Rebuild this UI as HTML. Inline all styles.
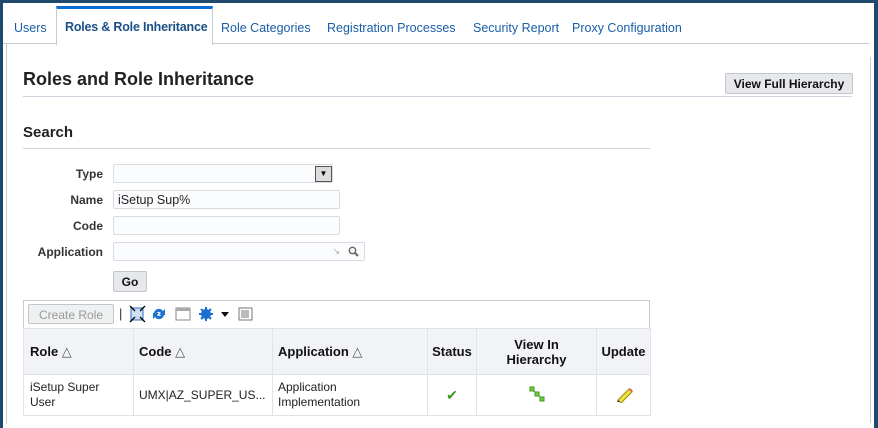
<!DOCTYPE html>
<html><head><style>
*{box-sizing:border-box;margin:0;padding:0}
body{width:878px;height:423px;overflow:hidden;background:#1f4a6e;font-family:"Liberation Sans",Arial,sans-serif;position:relative}
.frame{position:absolute;left:3px;top:3px;width:871px;height:425px;background:#fff}
.tabs{position:absolute;left:3px;top:0;height:44px;width:866px;border-bottom:1px solid #c4ccd8}
.tab{position:absolute;top:21px;font-size:12.5px;color:#1a5ea8;white-space:nowrap}
.active{position:absolute;left:56px;top:6px;width:157px;height:39px;border:1px solid #c4ccd8;border-top:3px solid #0a6ad6;border-bottom:none;background:#fff;font-size:12.5px;font-weight:bold;color:#1b4f86;padding:11px 0 0 8px;white-space:nowrap;letter-spacing:-0.2px}
.box{position:absolute;left:6px;top:44px;width:866px;height:380px;border-left:1px solid #c4ccd8}
h1{position:absolute;left:23px;top:69px;font-size:18px;color:#222}
.rule{position:absolute;height:1px;background:#cfd6e0}
h2{position:absolute;left:23px;top:124px;font-size:15px;color:#222}
.btn{position:absolute;background:#e6e8eb;border:1px solid #c3c7cc;border-radius:2px;font-size:12px;font-weight:bold;color:#111;text-align:center}
.lbl{position:absolute;font-size:12px;font-weight:bold;color:#333;text-align:right;width:80px;left:23px}
.inp{position:absolute;left:113px;height:19px;border:1px solid #d8dce2;background:#fbfcfd;font-size:12.5px;color:#222;padding:2px 4px;border-radius:2px}
table{position:absolute;left:23px;top:328px;border-collapse:collapse;font-size:12px}
td,th{border:1px solid #dfe3e8}
th{background:#f1f3f6;font-size:13px;color:#111;height:46px}
td{height:41px;color:#222}
.tb{position:absolute;left:23px;top:300px;width:627px;height:29px;border:1px solid #c4ccd8;border-bottom:none}
</style></head><body>
<div class="frame"></div>
<div class="tabs"></div>
<div class="tab" style="left:14px">Users</div>
<div class="active">Roles &amp; Role Inheritance</div>
<div class="tab" style="left:221px">Role Categories</div>
<div class="tab" style="left:327px">Registration Processes</div>
<div class="tab" style="left:473px">Security Report</div>
<div class="tab" style="left:572px">Proxy Configuration</div>
<div class="box"></div>
<div class="rule" style="left:870px;top:57px;width:1px;height:366px;background:#c4ccd8"></div>
<h1>Roles and Role Inheritance</h1>
<div class="rule" style="left:23px;top:96px;width:829px"></div>
<div class="btn" style="left:725px;top:73px;width:128px;height:21px;padding-top:3px">View Full Hierarchy</div>
<h2>Search</h2>
<div class="rule" style="left:23px;top:148px;width:627px"></div>
<div class="lbl" style="top:167px">Type</div>
<div class="inp" style="top:164px;width:220px"></div>
<div style="position:absolute;left:315px;top:166px;width:17px;height:16px;border:1px solid #555;background:#ddd;font-size:8px;text-align:center;line-height:14px">▼</div>
<div class="lbl" style="top:193px">Name</div>
<div class="inp" style="top:190px;width:227px">iSetup Sup%</div>
<div class="lbl" style="top:219px">Code</div>
<div class="inp" style="top:216px;width:227px"></div>
<div class="lbl" style="top:245px">Application</div>
<div class="inp" style="top:242px;width:252px"><svg style="position:absolute;right:5px;top:3px" width="11" height="11"><circle cx="4.5" cy="4.5" r="3.2" fill="none" stroke="#666" stroke-width="1.4"/><path d="M7 7l3 3" stroke="#666" stroke-width="2"/></svg><span style="position:absolute;right:24px;top:3px;font-size:9px;color:#aaa">↘</span></div>
<div class="btn" style="left:113px;top:271px;width:34px;height:21px;padding-top:3px">Go</div>
<div class="tb"></div>
<div class="btn" style="left:28px;top:304px;width:86px;height:20px;padding-top:3px;color:#999;font-weight:normal;background:#eef0f2">Create Role</div>
<div style="position:absolute;left:119px;top:306px;font-size:13px;color:#333">|</div>
<svg style="position:absolute;left:129px;top:305px" width="130" height="18">
<rect x="2" y="3" width="12" height="12" fill="#cfe0f4" stroke="#2a6cc0"/><path d="M1 1l5 5M16 1l-5 5M1 17l5-5M16 17l-5-5" stroke="#000" stroke-width="1.3"/>
<path d="M25 8a5 5 0 0 1 9-2l2-2v6h-6l2-2a3 3 0 0 0-5 1zM35 10a5 5 0 0 1-9 2l-2 2v-6h6l-2 2a3 3 0 0 0 5-1z" fill="#1c73d1"/>
<rect x="47" y="3" width="14" height="12" fill="#fff" stroke="#888"/><rect x="47" y="3" width="14" height="3" fill="#aaa"/>
<circle cx="77" cy="9" r="5" fill="#1c6ed0"/><circle cx="77" cy="9" r="2" fill="#fff"/><path d="M77 2v14M70 9h14M72 4l10 10M82 4l-10 10" stroke="#1c6ed0" stroke-width="2"/>
<path d="M92 7h8l-4 5z" fill="#111"/>
<rect x="110" y="3" width="13" height="12" fill="#fff" stroke="#777"/><path d="M113 5v8M115 5v8M117 5v8M119 5v8" stroke="#777"/>
</svg>
<table>
<tr><th style="width:110px;text-align:left;padding-left:6px">Role <span style="font-weight:normal;color:#555">△</span></th>
<th style="width:139px;text-align:left;padding-left:5px">Code <span style="font-weight:normal;color:#555">△</span></th>
<th style="width:155px;text-align:left;padding-left:5px">Application <span style="font-weight:normal;color:#555">△</span></th>
<th style="width:49px">Status</th><th style="width:120px">View In<br>Hierarchy</th><th style="width:54px">Update</th></tr>
<tr><td style="padding-left:6px;line-height:15px">iSetup Super<br>User</td><td style="padding-left:5px">UMX|AZ_SUPER_US...</td><td style="padding-left:5px;line-height:15px">Application<br>Implementation</td>
<td style="text-align:center;color:#3a9a1a;font-size:14px">✔</td>
<td style="text-align:center"><svg width="16" height="16"><path d="M4 4l5 5 5 5" stroke="#555"/><rect x="1" y="1" width="4" height="4" fill="#7c3" stroke="#392"/><rect x="6" y="6" width="4" height="4" fill="#7c3" stroke="#392"/><rect x="11" y="11" width="4" height="4" fill="#7c3" stroke="#392"/></svg></td>
<td style="text-align:center"><svg width="18" height="18"><path d="M3 15l11-11 3 3-11 11z" fill="#f3e23a" stroke="#a08a10"/><path d="M14 4l3 3 1-1-3-3z" fill="#e55"/><path d="M2 17l1-2 2 2z" fill="#333"/></svg></td></tr>
</table>
</body></html>
